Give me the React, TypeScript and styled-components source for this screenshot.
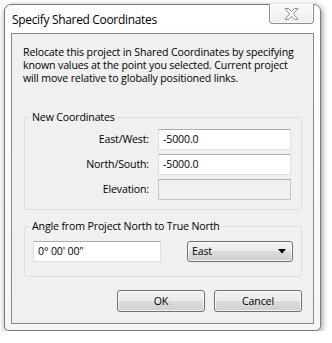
import React from "react";
import styled, { createGlobalStyle } from "styled-components";

const Global = createGlobalStyle`
  html, body { margin: 0; padding: 0; background: #ffffff; }
  body { font-family: "Open Sans", "Noto Sans", sans-serif; color: #000; }
  * { box-sizing: border-box; }
`;

const Window = styled.div`
  margin: 4px 0 0 4px;
  width: 317px;
  height: 327px;
  border: 1px solid #7b7b7b;
  border-radius: 7px 7px 5px 5px;
  background: linear-gradient(#ffffff, #f6f6f6);
  box-shadow: 1px 2px 6px rgba(0, 0, 0, 0.45);
  padding: 0 6px 6px 6px;
  display: flex;
  flex-direction: column;
`;

const TitleBar = styled.div`
  height: 28px;
  display: flex;
  justify-content: space-between;
  align-items: flex-start;
  flex-shrink: 0;
`;

const Title = styled.div`
  font-size: 12px;
  line-height: 16px;
  padding: 7px 0 0 1px;
  letter-spacing: -0.33px;
`;

const CloseButton = styled.div`
  margin-top: -1px;
  width: 45px;
  height: 20px;
  border: 1px solid #8d8d8d;
  border-top: none;
  border-radius: 0 0 4px 4px;
  background: linear-gradient(#f9f9f9, #eeeeee);
  box-shadow: inset 0 0 0 1px #ffffff;
  display: flex;
  align-items: center;
  justify-content: center;
`;

const Client = styled.div`
  flex: 1;
  border: 1px solid #8a8a8a;
  background: #f0f0f0;
  padding: 12px 11px 11px 12px;
  display: flex;
  flex-direction: column;
  font-size: 10.6px;
  line-height: 13px;
  letter-spacing: -0.15px;
`;

const Description = styled.p`
  margin: 0 0 26px -1px;
  width: 282px;
`;

const Group = styled.fieldset<{ $bottom: number; $top: number }>`
  margin: 0;
  border: 1px solid #d5dfe5;
  border-radius: 3px;
  padding: ${(p) => p.$top}px 9px ${(p) => p.$bottom}px 5px;
  min-width: 0;
`;

const Legend = styled.legend`
  padding: 0 2px;
  line-height: 13px;
`;

const FieldGrid = styled.div`
  display: grid;
  grid-template-columns: 119px 133px;
  column-gap: 9px;
  row-gap: 4px;
  align-items: center;
`;

const FieldLabel = styled.label`
  text-align: right;
`;

const TextBox = styled.div<{ $disabled?: boolean; $width?: number }>`
  height: 21px;
  width: ${(p) => (p.$width ? `${p.$width}px` : "auto")};
  border: 1px solid ${(p) => (p.$disabled ? "#c2c6ca" : "#dbdfe6")};
  border-top-color: ${(p) => (p.$disabled ? "#adb2b5" : "#abadb3")};
  background: ${(p) => (p.$disabled ? "#f0f0f0" : "#ffffff")};
  padding: 0 4px;
  display: flex;
  align-items: center;
`;

const GroupSpacer = styled.div`
  height: 10px;
  flex-shrink: 0;
`;

const AngleRow = styled.div`
  display: flex;
  justify-content: space-between;
  align-items: center;
  padding: 0 0 0 3px;
  margin-right: -1px;
`;

const Combo = styled.div`
  width: 106px;
  height: 21px;
  border: 1px solid #707070;
  border-radius: 3px;
  background: linear-gradient(#f2f2f2 0%, #ebebeb 50%, #dddddd 50%, #cfcfcf 100%);
  box-shadow: inset 0 0 0 1px rgba(255, 255, 255, 0.75);
  display: flex;
  align-items: center;
  justify-content: space-between;
  padding: 0 6px 0 4px;
`;

const ButtonRow = styled.div`
  display: flex;
  justify-content: flex-end;
  gap: 9px;
  margin-top: 13px;
`;

const Button = styled.div`
  width: 88px;
  height: 22px;
  border: 1px solid #707070;
  border-radius: 3px;
  background: linear-gradient(#f2f2f2 0%, #ebebeb 50%, #dddddd 50%, #cfcfcf 100%);
  box-shadow: inset 0 0 0 1px rgba(255, 255, 255, 0.75);
  display: flex;
  align-items: center;
  justify-content: center;
`;

const CloseGlyph = () => (
  <svg width="15" height="12" viewBox="0 0 15 12">
    <polygon
      points="1,0.5 4.6,0.5 7.5,3.6 10.4,0.5 14,0.5 9.4,5.9 14,11.3 10.4,11.3 7.5,8.2 4.6,11.3 1,11.3 5.6,5.9"
      fill="#ffffff"
      stroke="#8f8f8f"
      strokeWidth="1"
      strokeLinejoin="round"
    />
  </svg>
);

const Arrow = () => (
  <svg width="8" height="5" viewBox="0 0 8 5">
    <polygon points="0,0 8,0 4,4.5" fill="#000" />
  </svg>
);

export default function App() {
  return (
    <>
      <Global />
      <Window>
        <TitleBar>
          <Title>Specify Shared Coordinates</Title>
          <CloseButton>
            <CloseGlyph />
          </CloseButton>
        </TitleBar>
        <Client>
          <Description>
            Relocate this project in Shared Coordinates by specifying known
            values at the point you selected. Current project will move
            relative to globally positioned links.
          </Description>
          <Group $top={5} $bottom={9}>
            <Legend>New Coordinates</Legend>
            <FieldGrid>
              <FieldLabel>East/West:</FieldLabel>
              <TextBox>-5000.0</TextBox>
              <FieldLabel>North/South:</FieldLabel>
              <TextBox>-5000.0</TextBox>
              <FieldLabel>Elevation:</FieldLabel>
              <TextBox $disabled />
            </FieldGrid>
          </Group>
          <GroupSpacer />
          <Group $top={8} $bottom={14}>
            <Legend>Angle from Project North to True North</Legend>
            <AngleRow>
              <TextBox $width={128}>0° 00' 00"</TextBox>
              <Combo>
                <span>East</span>
                <Arrow />
              </Combo>
            </AngleRow>
          </Group>
          <ButtonRow>
            <Button>OK</Button>
            <Button>Cancel</Button>
          </ButtonRow>
        </Client>
      </Window>
    </>
  );
}
